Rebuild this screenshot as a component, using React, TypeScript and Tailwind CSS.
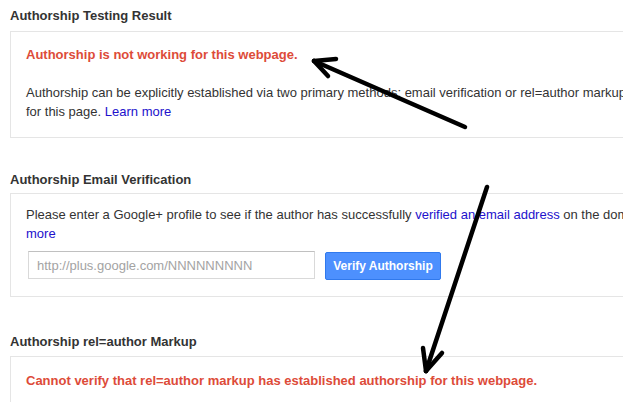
import React from 'react';

const font = { fontFamily: '"Liberation Sans", Arial, sans-serif' };

function SectionTitle({ children, className = '' }: { children: React.ReactNode; className?: string }) {
  return <h2 className={`text-[13px] leading-[16px] font-bold text-[#333] ${className}`}>{children}</h2>;
}

function Arrows() {
  // hand-drawn annotation arrows over the page
  return (
    <svg className="pointer-events-none absolute left-0 top-0" width="623" height="402" viewBox="0 0 623 402">
      <g stroke="#000" strokeWidth="4.5" strokeLinecap="round" fill="none">
        <path d="M465 127 L314 61" />
        <path d="M314 61 L336 59" />
        <path d="M314 61 L328 76" />
        <path d="M487 187 L426 371" />
        <path d="M426 371 L423 348" />
        <path d="M426 371 L442 353" />
      </g>
    </svg>
  );
}

export default function App() {
  return (
    <div className="relative h-[402px] w-[623px] overflow-hidden bg-white" style={font}>
      <div className="w-[900px] pl-[10px] pt-[8px]">
        <SectionTitle className="mb-[7px]">Authorship Testing Result</SectionTitle>
        <div className="border border-[#e5e5e5] pl-[15px] pt-[15px] pb-[16px]">
          <p className="text-[13px] leading-[16px] font-bold text-[#dd4b39]">
            Authorship is not working for this webpage.
          </p>
          <p className="mt-[20px] text-[13px] leading-[19px] text-[#333]">
            Authorship can be explicitly established via two primary methods: email verification or rel=author markup. No method was detected
            <br />
            for this page.{' '}
            <a href="#" className="text-[#2211cc]">Learn more</a>
          </p>
        </div>

        <SectionTitle className="mt-[34px] mb-[5px]">Authorship Email Verification</SectionTitle>
        <div className="border border-[#e5e5e5] pl-[15px] pt-[11px] pb-[16px]">
          <p className="text-[13px] leading-[19px] text-[#333]">
            Please enter a Google+ profile to see if the author has successfully{' '}
            <a href="#" className="text-[#2211cc]">verified an email address</a> on the domain of this page.{' '}
            <a href="#" className="text-[#2211cc]">
              Learn
              <br />
              more
            </a>
          </p>
          <div className="mt-[8px] flex items-start gap-[10px] pl-[2px]">
            <input
              type="text"
              placeholder="http://plus.google.com/NNNNNNNNN"
              className="h-[28px] w-[287px] border border-[#d9d9d9] border-t-[#c0c0c0] bg-white px-[8px] text-[13px] text-[#333] outline-none placeholder:text-[#a3a3a3]"
            />
            <button className="mt-[1px] h-[28px] w-[116px] rounded-[2px] border border-[#3079ed] bg-[#4d90fe] text-[12px] font-bold text-white">
              Verify Authorship
            </button>
          </div>
        </div>

        <SectionTitle className="mt-[37px] mb-[6px]">Authorship rel=author Markup</SectionTitle>
        <div className="border border-[#e5e5e5] pl-[15px] pt-[16px] pb-[16px]">
          <p className="text-[13px] leading-[16px] font-bold text-[#dd4b39]">
            Cannot verify that rel=author markup has established authorship for this webpage.
          </p>
        </div>
      </div>
      <Arrows />
    </div>
  );
}
